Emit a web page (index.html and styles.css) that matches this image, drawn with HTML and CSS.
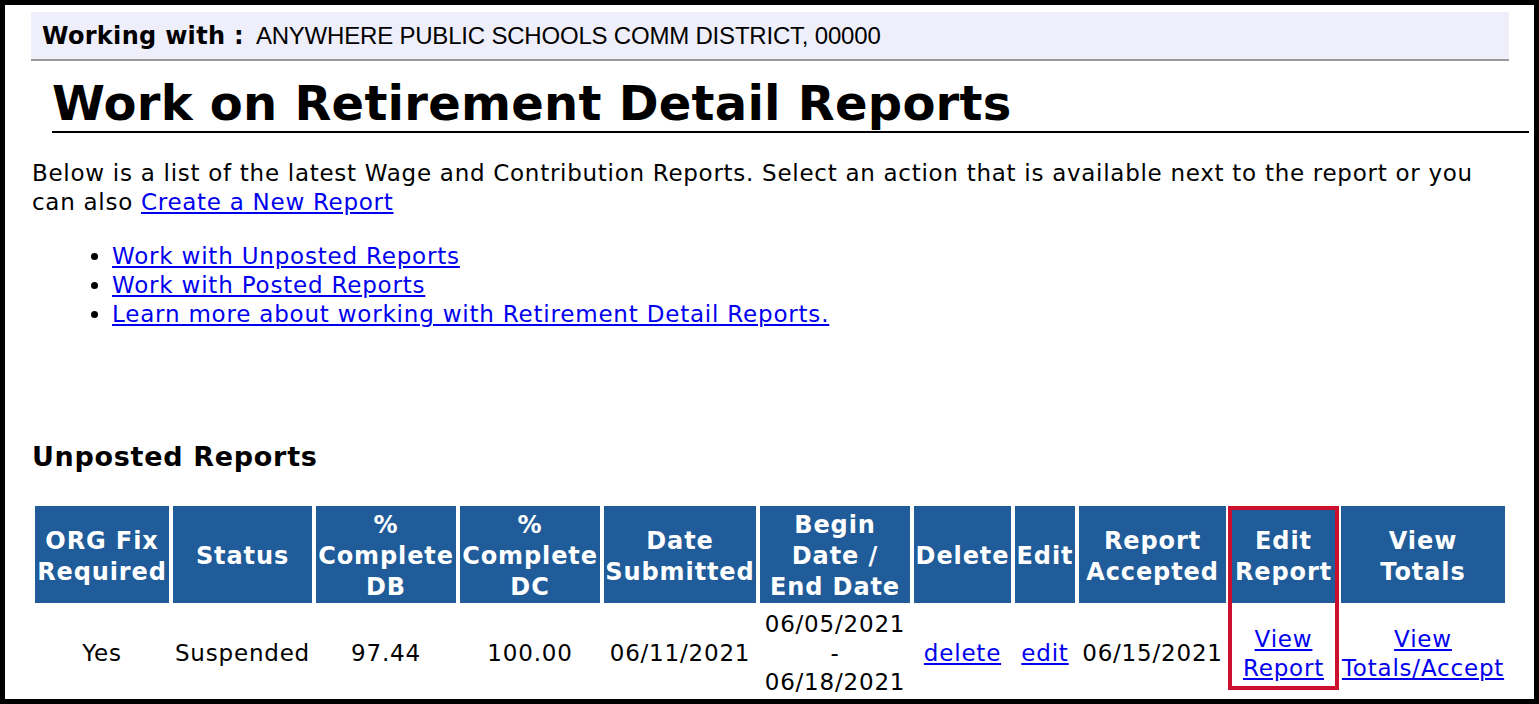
FILE: index.html
```html
<!DOCTYPE html>
<html>
<head>
<meta charset="utf-8">
<title>Work on Retirement Detail Reports</title>
<link rel="stylesheet" href="styles.css">
</head>
<body>
<div class="frame">
  <div class="page">
    <div class="working">
      <span class="working-label">Working with :</span>
      <span class="working-org">ANYWHERE PUBLIC SCHOOLS COMM DISTRICT, 00000</span>
    </div>
    <h1 class="title">Work on Retirement Detail Reports</h1>
    <p class="intro">Below is a list of the latest Wage and Contribution Reports. Select an action that is available next to the report or you can also <a href="#">Create a New Report</a></p>
    <ul class="links">
      <li><a href="#">Work with Unposted Reports</a></li>
      <li><a href="#">Work with Posted Reports</a></li>
      <li><a href="#">Learn more about working with Retirement Detail Reports.</a></li>
    </ul>
    <h2 class="section">Unposted Reports</h2>
    <table class="reports">
      <colgroup>
        <col class="c1"><col class="c2"><col class="c3"><col class="c4"><col class="c5"><col class="c6"><col class="c7"><col class="c8"><col class="c9"><col class="c10"><col class="c11">
      </colgroup>
      <thead>
        <tr>
          <th>ORG Fix<br>Required</th>
          <th>Status</th>
          <th>%<br>Complete<br>DB</th>
          <th>%<br>Complete<br>DC</th>
          <th>Date<br>Submitted</th>
          <th>Begin<br>Date /<br>End Date</th>
          <th>Delete</th>
          <th>Edit</th>
          <th>Report<br>Accepted</th>
          <th class="highlight-col">Edit<br>Report<span class="highlight-box"></span></th>
          <th>View<br>Totals</th>
        </tr>
      </thead>
      <tbody>
        <tr>
          <td>Yes</td>
          <td>Suspended</td>
          <td>97.44</td>
          <td>100.00</td>
          <td>06/11/2021</td>
          <td>06/05/2021<br>-<br>06/18/2021</td>
          <td><a href="#">delete</a></td>
          <td><a href="#">edit</a></td>
          <td>06/15/2021</td>
          <td><a href="#">View<br>Report</a></td>
          <td><a href="#">View<br>Totals/Accept</a></td>
        </tr>
      </tbody>
    </table>
  </div>
</div>
</body>
</html>
```

FILE: styles.css
```css
html, body {
  margin: 0;
  padding: 0;
  background: #000;
}
.frame {
  box-sizing: border-box;
  width: 1539px;
  height: 704px;
  border: 5px solid #000;
  background: #fff;
  overflow: hidden;
}
.page {
  padding: 7px 5px 0 26px;
  font-family: "DejaVu Sans", Verdana, sans-serif;
  color: #000;
}
.working {
  box-sizing: border-box;
  width: 1478px;
  height: 49px;
  background: #efeffc;
  border-bottom: 2px solid #999;
  display: flex;
  align-items: center;
  padding-left: 11px;
  gap: 12px;
}
.working-label {
  font-weight: bold;
  font-size: 24px;
  letter-spacing: 0.3px;
}
.working-org {
  font-family: "Liberation Sans", Arial, sans-serif;
  font-size: 24px;
  letter-spacing: -0.2px;
}
.title {
  margin: 14px 0 0 21px;
  font-size: 48px;
  line-height: 56px;
  letter-spacing: 0.25px;
  font-weight: bold;
  border-bottom: 2px solid #000;
  padding-bottom: 0;
}
.intro {
  margin: 26px 0 0 1px;
  font-size: 23px;
  letter-spacing: 0.72px;
  line-height: 29px;
  width: 1470px;
}
a {
  color: #0000ee;
  text-decoration: underline;
}
.links {
  margin: 24px 0 0 0;
  padding-left: 81px;
  font-size: 23px;
  letter-spacing: 0.8px;
  line-height: 29px;
}
.links li {
  padding-top: 1px;
}
.links li + li {
  padding-top: 0;
}
.section {
  margin: 112px 0 0 1px;
  font-size: 27px;
  letter-spacing: 0.7px;
  line-height: 32px;
  font-weight: bold;
}
.reports {
  margin-top: 29px;
  border-collapse: separate;
  border-spacing: 4px;
  table-layout: fixed;
  width: 1478px;
}
.c1 { width: 134px; }
.c2 { width: 139px; }
.c3 { width: 140px; }
.c4 { width: 140px; }
.c5 { width: 152px; }
.c6 { width: 150px; }
.c7 { width: 97px; }
.c8 { width: 60px; }
.c9 { width: 147px; }
.c10 { width: 107px; }
.c11 { width: 164px; }
.reports th {
  background: #1f5c99;
  color: #fff;
  font-weight: bold;
  font-size: 24px;
  letter-spacing: 0.9px;
  line-height: 31px;
  height: 93px;
  padding: 4px 0 0;
  text-align: center;
  vertical-align: middle;
  white-space: nowrap;
}
.reports td {
  font-size: 23px;
  letter-spacing: 0.8px;
  line-height: 29px;
  text-align: center;
  vertical-align: middle;
  padding: 3px 0 7px;
  white-space: nowrap;
}
.highlight-col {
  position: relative;
}
.highlight-box {
  position: absolute;
  left: -2px;
  top: 0;
  width: 111px;
  height: 184px;
  border: 4px solid #cc0f2f;
  box-sizing: border-box;
  pointer-events: none;
}
```
